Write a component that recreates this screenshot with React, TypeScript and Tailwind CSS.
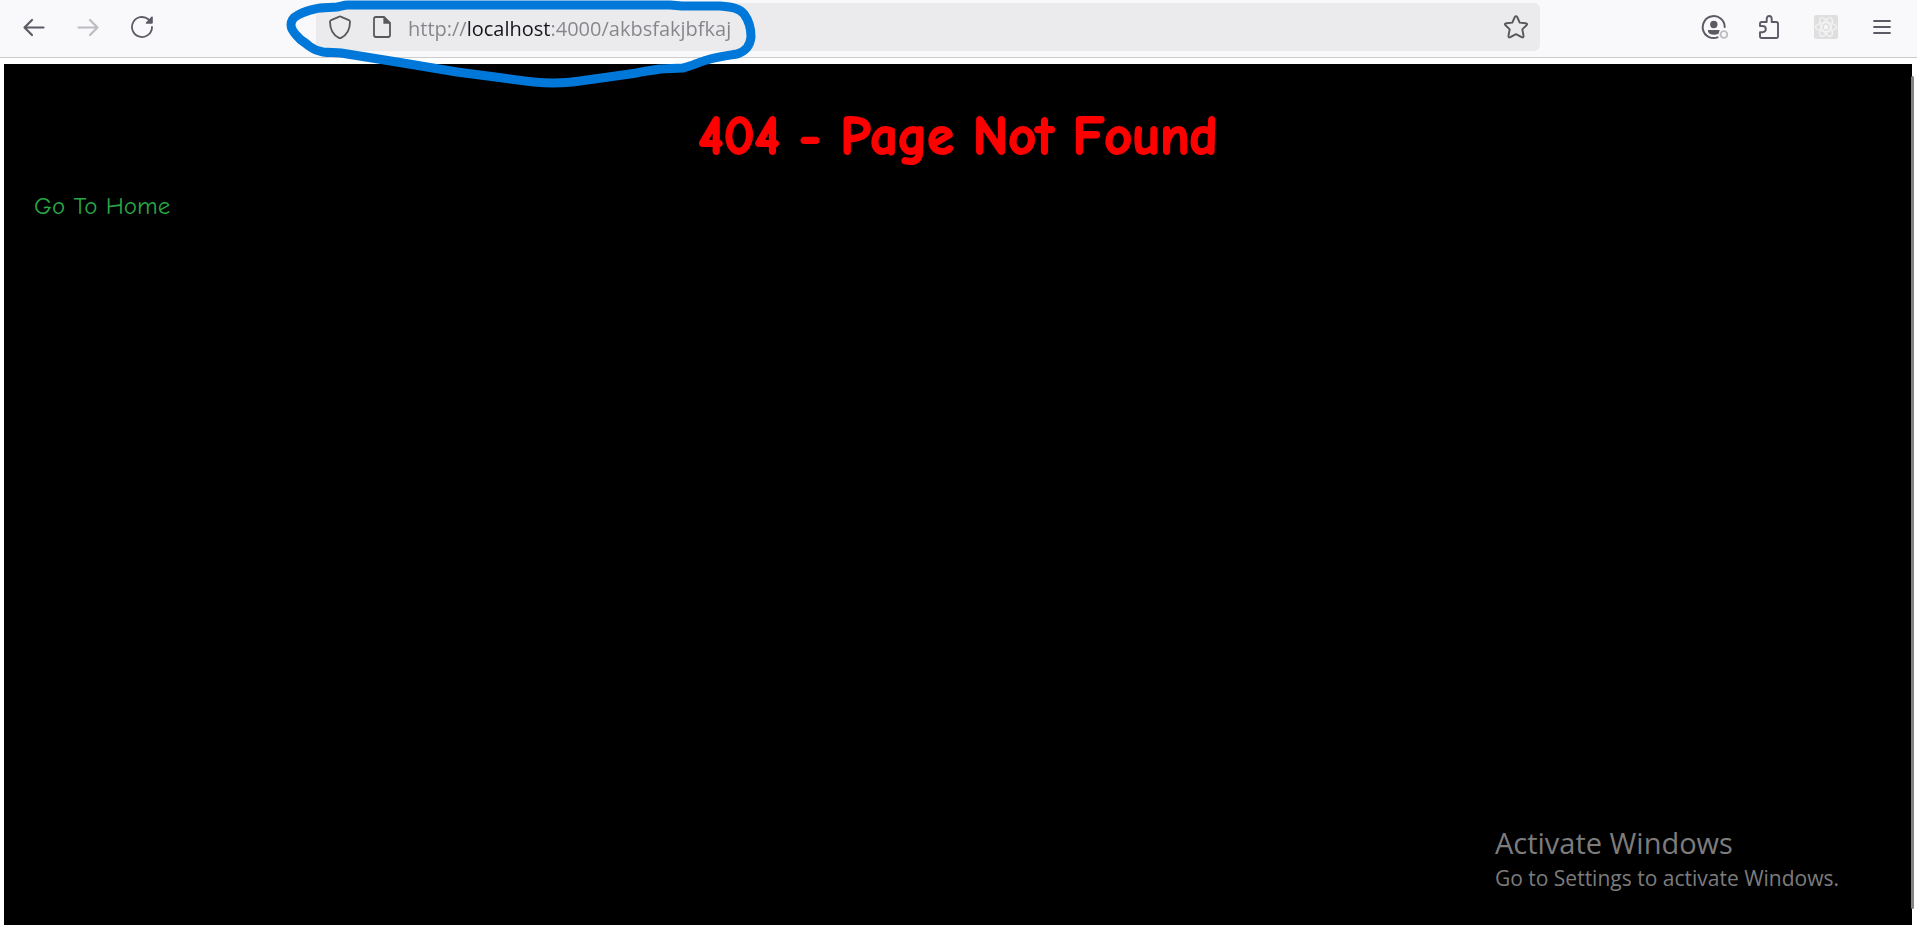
import React, { useState } from 'react';

const iconButton = 'flex h-12 w-12 shrink-0 items-center justify-center rounded';

function BackIcon() {
  return (
    <svg width="24" height="24" viewBox="0 0 24 24" fill="none" stroke="#5b5b66" strokeWidth="2.2" strokeLinecap="round" strokeLinejoin="round">
      <path d="M21.5 12.5H2.5M10 5L2.5 12.5L10 20" />
    </svg>
  );
}

function ForwardIcon() {
  return (
    <svg width="24" height="24" viewBox="0 0 24 24" fill="none" stroke="#bcbcc1" strokeWidth="2.2" strokeLinecap="round" strokeLinejoin="round">
      <path d="M2.5 12.5H21.5M14 5L21.5 12.5L14 20" />
    </svg>
  );
}

function ReloadIcon() {
  return (
    <svg width="24" height="24" viewBox="0 0 24 24" fill="none">
      <path d="M22 12A10 10 0 1 1 18.6 4.5" stroke="#5b5b66" strokeWidth="1.8" strokeLinecap="round" />
      <path d="M22.8 2V7.8Q22.8 8.8 21.8 8.8H16.2Q15.2 8.4 16 7.5L21.6 1.6Q22.5 1 22.8 2Z" fill="#5b5b66" />
    </svg>
  );
}

function ShieldIcon() {
  return (
    <svg width="24" height="26" viewBox="0 0 24 26" fill="none" stroke="#58585c" strokeWidth="1.8" strokeLinejoin="round">
      <path d="M12 2.4Q12.6 2.4 13.2 2.9L20.9 6.1Q22 6.5 22 7.7C22 15.5 18.6 21 13.1 23.9Q12 24.5 10.9 23.9C5.4 21 2 15.5 2 7.7Q2 6.5 3.1 6.1L10.8 2.9Q11.4 2.4 12 2.4Z" />
    </svg>
  );
}

function DocumentIcon() {
  return (
    <svg width="20" height="24" viewBox="0 0 20 24" fill="none">
      <path d="M4 2H12L18 8V20Q18 22 16 22H4Q2 22 2 20V4Q2 2 4 2Z" stroke="#58585c" strokeWidth="1.8" strokeLinejoin="round" />
      <path d="M11.4 2V8.8H18.6Z" fill="#58585c" />
    </svg>
  );
}

function StarIcon() {
  return (
    <svg width="26" height="26" viewBox="0 0 26 26" fill="none" stroke="#58585c" strokeWidth="1.9" strokeLinejoin="round">
      <path d="M11.8 3Q13 1.2 14.2 3L16.7 8.6L22.6 9.2Q25 9.6 23.5 11.3L19.3 15.4L20.5 21.5Q20.8 24 18.6 23.2L13 20.2L7.4 23.2Q5.2 24 5.5 21.5L6.7 15.4L2.5 11.3Q1 9.6 3.4 9.2L9.3 8.6Z" />
    </svg>
  );
}

function AccountIcon() {
  return (
    <svg width="28" height="26" viewBox="0 0 28 26" fill="none">
      <path d="M24.7 13A11 11 0 1 0 17.5 23.4" stroke="#5b5b66" strokeWidth="2" strokeLinecap="round" />
      <circle cx="13.8" cy="10.5" r="3.7" fill="#5b5b66" />
      <path d="M8 16H19.7L18.5 19.8Q13.7 21.8 9.2 19.4Q7.4 18 8 16Z" fill="#5b5b66" />
      <circle cx="23.9" cy="20.5" r="3.4" stroke="#bdbdc3" strokeWidth="1.9" />
    </svg>
  );
}

function ExtensionsIcon() {
  return (
    <svg width="24" height="26" viewBox="0 0 24 26" fill="none" stroke="#5b5b66" strokeWidth="1.9" strokeLinejoin="round">
      <path d="M2 12V9.8Q2 8 3.8 8H8.7V5Q8.7 2 11.2 2Q13.7 2 13.7 5V8H18.2Q20 8 20 9.8V22.2Q20 24 18.2 24H3.8Q2 24 2 22.2V18.3H4.4Q7.8 18.2 7.8 15.1Q7.8 12 4.4 12Z" />
    </svg>
  );
}

function AtomIcon() {
  return (
    <svg width="24" height="24" viewBox="0 0 24 24" fill="none">
      <rect width="24" height="24" rx="2" fill="#dfdfdf" />
      <g stroke="#f4f4f4" strokeWidth="1.2">
        <ellipse cx="12" cy="12" rx="10.5" ry="4.3" />
        <ellipse cx="12" cy="12" rx="10.5" ry="4.3" transform="rotate(60 12 12)" />
        <ellipse cx="12" cy="12" rx="10.5" ry="4.3" transform="rotate(120 12 12)" />
      </g>
      <circle cx="12" cy="12" r="2.2" fill="#f6f6f6" />
    </svg>
  );
}

function MenuIcon() {
  return (
    <svg width="20" height="20" viewBox="0 0 20 20" fill="none" stroke="#5b5b66" strokeWidth="1.8" strokeLinecap="round">
      <path d="M2 4H18M2 10H18M2 16H18" />
    </svg>
  );
}

function Toolbar() {
  const [address, setAddress] = useState('http://localhost:4000/akbsfakjbfkaj');
  return (
    <header className="flex items-center border-b border-[#cccccf] bg-[#f9f9fb] pt-[3px] pr-[11px] pb-[6px] pl-[10px]">
      <div className="flex gap-[6px]">
        <button type="button" aria-label="Back" className={iconButton}><BackIcon /></button>
        <button type="button" aria-label="Forward" disabled className={iconButton}><ForwardIcon /></button>
        <button type="button" aria-label="Reload" className={iconButton}><ReloadIcon /></button>
      </div>
      <div className="ml-[150px] flex h-12 min-w-0 flex-1 items-center rounded-md bg-[#ebebed] pr-[11px] pl-3">
        <button type="button" aria-label="Tracking protection" className="shrink-0"><ShieldIcon /></button>
        <button type="button" aria-label="Site information" className="ml-5 shrink-0"><DocumentIcon /></button>
        <input
          type="text"
          aria-label="Address"
          value={address}
          onChange={(event) => setAddress(event.target.value)}
          className="ml-4 h-12 min-w-0 flex-1 bg-[linear-gradient(to_right,#85858a_59px,#15141a_59px,#15141a_144px,#85858a_144px)] bg-clip-text pt-[2px] font-['Segoe_UI','Open_Sans',sans-serif] text-[20px] text-transparent caret-black outline-none"
        />
        <button type="button" aria-label="Bookmark this page" className="shrink-0"><StarIcon /></button>
      </div>
      <div className="ml-[150px] flex gap-2">
        <button type="button" aria-label="Account" className={iconButton}><AccountIcon /></button>
        <button type="button" aria-label="Extensions" className={iconButton}><ExtensionsIcon /></button>
        <button type="button" aria-label="React developer tools" className={iconButton}><AtomIcon /></button>
        <button type="button" aria-label="Menu" className={iconButton}><MenuIcon /></button>
      </div>
    </header>
  );
}

function InkLoop() {
  return (
    <svg
      aria-hidden="true"
      className="pointer-events-none absolute top-0 left-[280px]"
      width="480"
      height="92"
      viewBox="280 0 480 92"
      fill="none"
      stroke="#0078d9"
      strokeWidth="9"
      strokeLinecap="round"
      strokeLinejoin="round"
    >
      <path d="M348 5H670L682 6H720C734 7 740 9 744 14C750 22 751 30 751 37C750 46 746 51 737 54C725 56 716 57 707 60C699 62 692 66 683 68L660 69C650 71 644 71 637 73L587 80C575 82 565 83 553 83C540 83 522 81 503 78L457 72L403 63L341 53C335 52 330 53 323 52C317 51 313 49 309 46C305 42 301 41 298 37C293 32 291 29 291 25C291 20 294 17 298 15C304 12 309 10 315 9C323 7 330 8 337 7C342 6 344 5 348 5Z" />
    </svg>
  );
}

function NotFoundPage() {
  return (
    <main className="flex flex-1 flex-col bg-black px-[30px] font-['Comic_Sans_MS','Comic_Neue','Open_Sans',sans-serif]">
      <h1 className="mt-[37px] text-center text-[54px] leading-[72px] font-bold text-[#ff0000] [-webkit-text-stroke:2px_#ff0000]">404 - Page Not Found</h1>
      <p className="mt-[15px] text-[25px] leading-9">
        <a href="/" className="text-[#28a745]">Go To Home</a>
      </p>
    </main>
  );
}

function ActivationNotice() {
  return (
    <aside className="pointer-events-none absolute right-[78px] bottom-[33px] font-['Segoe_UI','Open_Sans',sans-serif] text-[#7c7c7c]">
      <p className="text-[29px] leading-[42px]">Activate Windows</p>
      <p className="text-[21px] leading-7">Go to Settings to activate Windows.</p>
    </aside>
  );
}

export default function App() {
  return (
    <div className="relative flex min-h-screen flex-col overflow-hidden bg-white">
      <Toolbar />
      <div className="relative flex flex-1 flex-col pt-[6px] pr-[5px] pl-1">
        <NotFoundPage />
        <div className="absolute top-[18px] right-[3px] bottom-4 w-[3px] rounded-full bg-[#858585]" />
      </div>
      <InkLoop />
      <ActivationNotice />
    </div>
  );
}
